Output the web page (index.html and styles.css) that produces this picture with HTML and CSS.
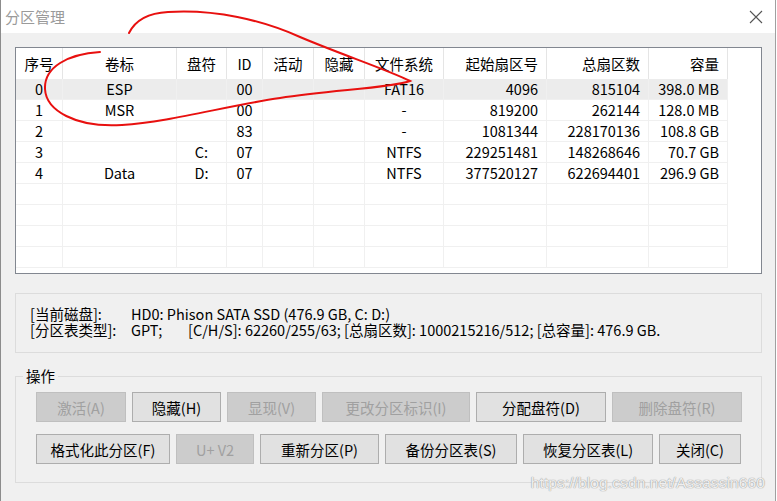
FILE: index.html
```html
<!DOCTYPE html>
<html lang="zh-CN">
<head>
<meta charset="utf-8">
<title>分区管理</title>
<link rel="stylesheet" href="styles.css">
</head>
<body>
<div class="window">
  <div class="titlebar">
    <span class="title">分区管理</span>
    <svg class="close" width="14" height="14" viewBox="0 0 14 14"><path d="M1 1 L13 13 M13 1 L1 13" stroke="#555" stroke-width="1.1" fill="none"/></svg>
  </div>
  <div class="content">
    <div class="list">
      <div class="row head">
        <div class="c">序号</div><div class="c">卷标</div><div class="c">盘符</div><div class="c">ID</div><div class="c">活动</div><div class="c">隐藏</div><div class="c">文件系统</div><div class="r">起始扇区号</div><div class="r">总扇区数</div><div class="r">容量</div><div class="f"></div>
      </div>
      <div class="row sel">
        <div class="c">0</div><div class="c">ESP</div><div class="c"></div><div class="c">00</div><div class="c"></div><div class="c"></div><div class="c">FAT16</div><div class="r">4096</div><div class="r">815104</div><div class="r">398.0 MB</div><div class="f"></div>
      </div>
      <div class="row">
        <div class="c">1</div><div class="c">MSR</div><div class="c"></div><div class="c">00</div><div class="c"></div><div class="c"></div><div class="c">-</div><div class="r">819200</div><div class="r">262144</div><div class="r">128.0 MB</div><div class="f"></div>
      </div>
      <div class="row">
        <div class="c">2</div><div class="c"></div><div class="c"></div><div class="c">83</div><div class="c"></div><div class="c"></div><div class="c">-</div><div class="r">1081344</div><div class="r">228170136</div><div class="r">108.8 GB</div><div class="f"></div>
      </div>
      <div class="row">
        <div class="c">3</div><div class="c"></div><div class="c">C:</div><div class="c">07</div><div class="c"></div><div class="c"></div><div class="c">NTFS</div><div class="r">229251481</div><div class="r">148268646</div><div class="r">70.7 GB</div><div class="f"></div>
      </div>
      <div class="row">
        <div class="c">4</div><div class="c">Data</div><div class="c">D:</div><div class="c">07</div><div class="c"></div><div class="c"></div><div class="c">NTFS</div><div class="r">377520127</div><div class="r">622694401</div><div class="r">296.9 GB</div><div class="f"></div>
      </div>
      <div class="row"><div></div><div></div><div></div><div></div><div></div><div></div><div></div><div></div><div></div><div></div><div class="f"></div></div>
      <div class="row"><div></div><div></div><div></div><div></div><div></div><div></div><div></div><div></div><div></div><div></div><div class="f"></div></div>
      <div class="row"><div></div><div></div><div></div><div></div><div></div><div></div><div></div><div></div><div></div><div></div><div class="f"></div></div>
      <div class="row"><div></div><div></div><div></div><div></div><div></div><div></div><div></div><div></div><div></div><div></div><div class="f"></div></div>
    </div>

    <div class="info">
      <div class="line"><span class="lbl">[当前磁盘]:</span><span>HD0: Phison SATA SSD (476.9 GB, C: D:)</span></div>
      <div class="line"><span class="lbl">[分区表类型]:</span><span class="gpt">GPT;</span><span>[C/H/S]: 62260/255/63; [总扇区数]: 1000215216/512; [总容量]: 476.9 GB.</span></div>
    </div>

    <fieldset class="ops">
      <legend>操作</legend>
      <div class="btnrow">
        <button class="btn off w90">激活(A)</button>
        <button class="btn w89">隐藏(H)</button>
        <button class="btn off w89">显现(V)</button>
        <button class="btn off w148">更改分区标识(I)</button>
        <button class="btn w130">分配盘符(D)</button>
        <button class="btn off w130">删除盘符(R)</button>
      </div>
      <div class="btnrow">
        <button class="btn w134">格式化此分区(F)</button>
        <button class="btn off w78">U+ V2</button>
        <button class="btn w119">重新分区(P)</button>
        <button class="btn w132">备份分区表(S)</button>
        <button class="btn w130">恢复分区表(L)</button>
        <button class="btn w82">关闭(C)</button>
      </div>
    </fieldset>
  </div>
  <div class="watermark">https://blog.csdn.net/Assassin660</div>
</div>
<svg class="scribble" width="777" height="501" viewBox="0 0 777 501">
  <path d="M129 33 C135 21 148 13 168 12 C215 9 262 20 300 37 C340 54 388 70 410 81 C392 88 330 90 280 98 C225 106 170 122 122 125 C75 128 46 110 45 89 C44 67 68 54 100 52" fill="none" stroke="#e8100f" stroke-width="2" stroke-linecap="round"/>
</svg>
</body>
</html>
```
FILE: styles.css
```css
* { box-sizing: border-box; }
html, body { margin: 0; padding: 0; }
body {
  width: 777px;
  height: 501px;
  overflow: hidden;
  background: #ffffff;
  font-family: "Noto Sans CJK SC", "Noto Sans", sans-serif;
  font-size: 14.5px;
  color: #000;
  position: relative;
}
.window {
  position: relative;
  width: 776px;
  height: 501px;
  background: #f0f0f0;
  border-left: 1px solid #8c8c8c;
  border-right: 1px solid #a0a0a0;
}
.titlebar {
  height: 33px;
  background: #ffffff;
  display: flex;
  align-items: center;
  justify-content: space-between;
  padding: 0 12px 0 4px;
}
.title {
  color: #9a9a9a;
  font-size: 15px;
  line-height: 20px;
}
.close { display: block; margin-top: 0; }
.content {
  padding: 14px 13px 0 14px;
}
.list {
  width: 747px;
  height: 227px;
  background: #fff;
  border: 1px solid #828790;
  overflow: hidden;
}
.row {
  display: grid;
  grid-template-columns: 47px 114px 50px 36px 51px 51px 79px 103px 102px 79px 1fr;
  height: 21px;
  line-height: 20px;
}
.row > div {
  border-right: 1px solid #f0f0f0;
  border-bottom: 1px solid #f0f0f0;
  white-space: nowrap;
  overflow: hidden;
}
.row > div.f { border-right: 0; border-bottom: 0; }
.row.head { height: 31px; line-height: 31px; }
.row.head > div { border-right: 1px solid #e5e5e5; border-bottom: 0; }
.row.head > div.f { border-right: 0; }
.row.sel > div:not(.f) { background: #ececec; }
.c { text-align: center; }
.r { text-align: right; padding-right: 8px; }

.info {
  margin-top: 19px;
  width: 747px;
  height: 60px;
  border: 1px solid #dcdcdc;
  padding: 12px 0 0 14px;
  line-height: 16px;
}
.line { display: flex; white-space: nowrap; height: 16px; }
.lbl { width: 101px; flex: none; }
.gpt { width: 57px; flex: none; }

.ops {
  margin: 13px 0 0 0;
  width: 747px;
  height: 117px;
  border: 1px solid #dcdcdc;
  padding: 6px 0 0 20px;
}
.ops legend {
  margin-left: -13px;
  padding: 0 3px;
  line-height: 20px;
  font-size: 14.5px;
}
.btnrow {
  display: flex;
  gap: 6px;
  margin-bottom: 12px;
}
.btn {
  height: 30px;
  padding: 0;
  font-family: "Noto Sans CJK SC", "Noto Sans", sans-serif;
  font-size: 14.5px;
  color: #000;
  background: #e1e1e1;
  border: 1px solid #adadad;
  border-radius: 0;
  white-space: nowrap;
}
.btn.off {
  background: #cccccc;
  border-color: #bfbfbf;
  color: #a0a0a0;
}
.w78 { width: 78px; }
.w82 { width: 82px; }
.w89 { width: 89px; }
.w90 { width: 90px; }
.w119 { width: 119px; }
.w130 { width: 130px; }
.w132 { width: 132px; }
.w134 { width: 134px; }
.w148 { width: 148px; }

.watermark {
  position: absolute;
  right: 10px;
  top: 474px;
  font-family: "Liberation Sans", sans-serif;
  font-size: 15.5px;
  color: rgba(255,255,255,0.85);
  text-shadow: 0 0 1px #9a9a9a, 0 0 1px #9a9a9a;
  letter-spacing: 0.1px;
}
.scribble {
  position: absolute;
  left: 0;
  top: 0;
  pointer-events: none;
}
```
